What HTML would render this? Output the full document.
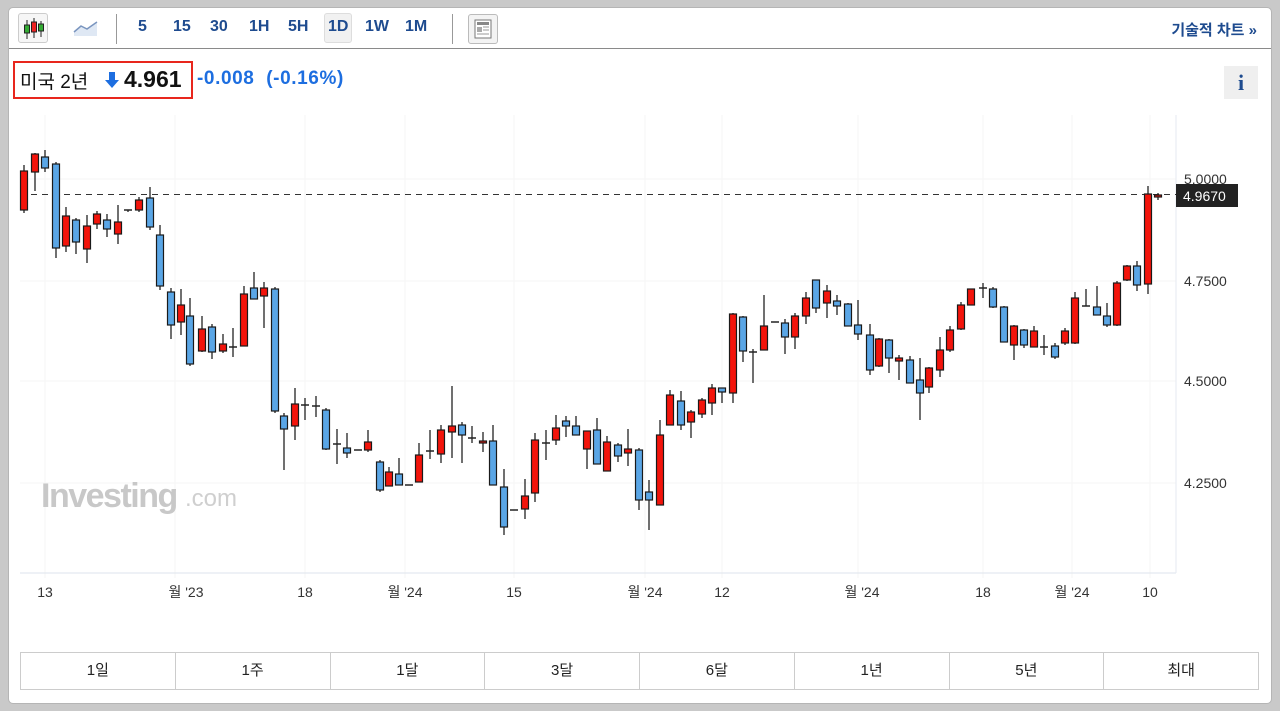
<!DOCTYPE html>
<html><head><meta charset="utf-8"><style>
*{margin:0;padding:0;box-sizing:border-box}
body{width:1280px;height:711px;background:#c9c9c9;font-family:"Liberation Sans","Noto Sans CJK KR",sans-serif;position:relative;overflow:hidden}
#panel{position:absolute;left:8px;top:7px;width:1264px;height:697px;background:#fff;border:1px solid #b5b5b5;border-radius:5px}
.tb{position:absolute;top:0;left:0;right:0;height:41px;border-bottom:1px solid #8a8a8a}
.tbi{position:absolute;top:10px;font-size:16px;font-weight:bold;color:#1e4b8f}
.sel{background:#f1f1f1;border:1px solid #ddd;border-radius:3px}
#svg{position:absolute;left:0;top:0}
.btns{position:absolute;left:11px;top:644px;width:1239px;height:38px;border:1px solid #ccc;display:flex}
.btns div{flex:1;border-right:1px solid #ccc;text-align:center;line-height:36px;font-size:15px;color:#222}
.btns div:last-child{border-right:none}
</style></head><body>
<div id="panel">
<div class="tb">
 <div style="position:absolute;left:9px;top:5px;width:30px;height:30px;border:1px solid #ccc;border-radius:3px;background:#f6f6f6">
  <svg width="30" height="30"><g stroke="#222" stroke-width="1"><line x1="8" y1="6" x2="8" y2="25"/><line x1="15" y1="4" x2="15" y2="24"/><line x1="22" y1="7" x2="22" y2="23"/></g><rect x="5.5" y="11" width="5" height="8" fill="#3a3" stroke="#222"/><rect x="12.5" y="8" width="5" height="10" fill="#e22" stroke="#222"/><rect x="19.5" y="10" width="5" height="7" fill="#3a3" stroke="#222"/></svg>
 </div>
 <svg style="position:absolute;left:64px;top:10px" width="26" height="20"><path d="M1 14 L8 8 L14 11 L24 4 L24 18 L1 18Z" fill="#dfe8f4"/><path d="M1 14 L8 8 L14 11 L24 4" fill="none" stroke="#7a95bf" stroke-width="1.5"/></svg>
 <div style="position:absolute;left:107px;top:6px;width:1px;height:30px;background:#999"></div>
 <span class="tbi" style="left:129px">5</span>
 <span class="tbi" style="left:164px">15</span>
 <span class="tbi" style="left:201px">30</span>
 <span class="tbi" style="left:240px">1H</span>
 <span class="tbi" style="left:279px">5H</span>
 <span class="tbi sel" style="left:315px;top:5px;padding:4px 3px;height:30px">1D</span>
 <span class="tbi" style="left:356px">1W</span>
 <span class="tbi" style="left:396px">1M</span>
 <div style="position:absolute;left:443px;top:6px;width:1px;height:30px;background:#999"></div>
 <div style="position:absolute;left:459px;top:6px;width:30px;height:30px;border:1px solid #bbb;border-radius:3px;background:#f3f3f3">
  <svg width="28" height="28"><rect x="6" y="5" width="16" height="18" fill="#fff" stroke="#777"/><rect x="8" y="7" width="12" height="3" fill="#888"/><rect x="8" y="12" width="5" height="5" fill="#aaa"/><g stroke="#999"><line x1="14" y1="12" x2="20" y2="12"/><line x1="14" y1="15" x2="20" y2="15"/><line x1="8" y1="19" x2="20" y2="19"/></g></svg>
 </div>
 <span style="position:absolute;right:14px;top:11px;font-size:15px;font-weight:bold;color:#1e4b8f">기술적 차트 »</span>
</div>
<div style="position:absolute;left:4px;top:53px;width:180px;height:38px;border:2px solid #e8261d"></div>
<div style="position:absolute;left:11px;top:59px;font-size:19px;color:#111;white-space:nowrap">미국 2년</div>
<svg style="position:absolute;left:96px;top:64px" width="14" height="16"><path d="M4 0h6v8h4L7 16 0 8h4z" fill="#1d6ee0"/></svg>
<div style="position:absolute;left:115px;top:58px;font-size:23px;font-weight:bold;color:#111">4.961</div>
<div style="position:absolute;left:188px;top:60px;font-size:19px;font-weight:bold;color:#1d6ee0;white-space:nowrap;letter-spacing:0.6px">-0.008&nbsp; (-0.16%)</div>
<div style="position:absolute;left:1215px;top:58px;width:34px;height:33px;background:#efefef;text-align:center;font:bold 22px 'Liberation Serif',serif;color:#1e4b8f;line-height:33px">i</div>
<div class="btns"><div>1일</div><div>1주</div><div>1달</div><div>3달</div><div>6달</div><div>1년</div><div>5년</div><div>최대</div></div>
</div>
<svg id="svg" width="1280" height="711"></svg>
<script>
var C=[[24,171,210,165,213,'r'],[35,154,172,153,191,'r'],[45,157,168,150,172,'b'],[56,164,248,162,258,'b'],[66,216,246,207,252,'r'],[76,220,242,218,254,'b'],[87,226,249,215,263,'r'],[97,214,224,211,229,'r'],[107,220,229,214,237,'b'],[118,222,234,205,244,'r'],[128,210,211,210,212,'d'],[139,200,210,197,212,'r'],[150,198,227,187,230,'b'],[160,235,286,225,290,'b'],[171,292,325,288,339,'b'],[181,305,322,289,335,'r'],[190,316,364,298,366,'b'],[202,329,351,316,352,'r'],[212,327,352,324,359,'b'],[223,344,351,334,353,'r'],[233,347,347,328,357,'d'],[244,294,346,286,346,'r'],[254,288,299,272,299,'b'],[264,288,296,282,328,'r'],[275,289,411,287,413,'b'],[284,416,429,413,470,'b'],[295,404,426,388,440,'r'],[305,405,405,398,420,'d'],[316,406,406,396,417,'d'],[326,410,449,408,450,'b'],[337,444,444,429,464,'d'],[347,448,453,433,458,'b'],[358,450,450,450,450,'d'],[368,442,450,430,452,'r'],[380,462,490,460,492,'b'],[389,472,486,467,486,'r'],[399,474,485,458,485,'b'],[409,485,485,485,485,'d'],[419,455,482,443,482,'r'],[430,451,451,430,459,'d'],[441,430,454,425,463,'r'],[452,426,432,386,458,'r'],[462,425,435,422,463,'b'],[472,438,438,426,443,'d'],[483,441,443,432,452,'r'],[493,441,485,425,485,'b'],[504,487,527,469,535,'b'],[514,510,510,510,510,'d'],[525,496,509,479,519,'r'],[535,440,493,433,502,'r'],[546,443,443,430,460,'d'],[556,428,440,415,445,'r'],[566,421,426,416,437,'b'],[576,426,435,416,435,'b'],[587,431,449,431,469,'r'],[597,430,464,418,464,'b'],[607,442,471,436,471,'r'],[618,445,456,443,462,'b'],[628,449,453,429,466,'r'],[639,450,500,448,510,'b'],[649,492,500,480,530,'b'],[660,435,505,420,505,'r'],[670,395,425,390,425,'r'],[681,401,425,391,430,'b'],[691,412,422,410,438,'r'],[702,400,414,398,418,'r'],[712,388,403,384,415,'r'],[722,388,392,388,403,'b'],[733,314,393,313,403,'r'],[743,317,351,316,362,'b'],[753,352,352,349,383,'d'],[764,326,350,295,350,'r'],[775,322,322,322,322,'d'],[785,323,337,319,354,'b'],[795,316,337,313,349,'r'],[806,298,316,292,324,'r'],[816,280,308,280,313,'b'],[827,291,303,285,318,'r'],[837,301,306,295,315,'b'],[848,304,326,303,326,'b'],[858,325,334,300,340,'b'],[870,335,370,324,375,'b'],[879,339,366,338,367,'r'],[889,340,358,339,373,'b'],[899,358,361,355,380,'r'],[910,360,383,356,383,'b'],[920,380,393,358,420,'b'],[929,368,387,367,393,'r'],[940,350,370,337,377,'r'],[950,330,350,326,352,'r'],[961,305,329,302,330,'r'],[971,289,305,289,304,'r'],[983,288,288,283,298,'d'],[993,289,307,287,308,'b'],[1004,307,342,306,342,'b'],[1014,326,345,325,360,'r'],[1024,330,345,329,348,'b'],[1034,331,347,326,347,'r'],[1044,347,347,335,355,'d'],[1055,346,357,343,359,'b'],[1065,331,343,328,345,'r'],[1075,298,343,292,344,'r'],[1086,306,306,289,306,'d'],[1097,307,315,286,315,'b'],[1107,316,325,303,327,'b'],[1117,283,325,281,326,'r'],[1127,266,280,265,281,'r'],[1137,266,285,261,291,'b'],[1148,194,284,186,294,'r'],[1158,195,197,193,200,'r']];
var s='';
var gx=[45,175,305,405,514,645,722,858,983,1072,1150];
gx.forEach(function(x){s+='<line x1="'+x+'" y1="115" x2="'+x+'" y2="578" stroke="#f6f6f6"/>';});
[179,281,381,483].forEach(function(y){s+='<line x1="20" y1="'+y+'" x2="1176" y2="'+y+'" stroke="#f6f6f6"/>';});
s+='<line x1="20" y1="573" x2="1176" y2="573" stroke="#dde3ec"/><line x1="1176" y1="115" x2="1176" y2="573" stroke="#e6eaf0"/>';
s+='<text x="41" y="507" font-family="Liberation Sans,sans-serif" font-weight="bold" font-size="34" fill="#c8c8c8" letter-spacing="-1.5">Investing</text><text x="185" y="506" font-family="Liberation Sans,sans-serif" font-size="24" fill="#cfcfcf">.com</text>';
s+='<line x1="20" y1="194.5" x2="1176" y2="194.5" stroke="#333" stroke-dasharray="6,5"/>';
C.forEach(function(c){var x=c[0];s+='<line x1="'+x+'" y1="'+c[3]+'" x2="'+x+'" y2="'+Math.max(c[4],c[2])+'" stroke="#222" stroke-width="1.3"/>';
if(c[5]=='d'){s+='<line x1="'+(x-4)+'" y1="'+c[1]+'" x2="'+(x+4)+'" y2="'+c[1]+'" stroke="#222" stroke-width="1.5"/>';}
else{var h=Math.max(c[2]-c[1],2);s+='<rect x="'+(x-3.5)+'" y="'+c[1]+'" width="7" height="'+h+'" fill="'+(c[5]=='r'?'#f3140b':'#5aa6e6')+'" stroke="#1a1a1a" stroke-width="1.2"/>';}});
[['5.0000',184],['4.7500',286],['4.5000',386],['4.2500',488]].forEach(function(t){s+='<text x="1184" y="'+t[1]+'" font-family="Liberation Sans,sans-serif" font-size="14" fill="#333">'+t[0]+'</text>';});
s+='<rect x="1176" y="184" width="62" height="23" fill="#222"/><text x="1183" y="201" font-family="Liberation Sans,sans-serif" font-size="14" fill="#fff">4.9670</text>';
[['13',45],['월 \'23',186],['18',305],['월 \'24',405],['15',514],['월 \'24',645],['12',722],['월 \'24',862],['18',983],['월 \'24',1072],['10',1150]].forEach(function(t){s+='<text x="'+t[1]+'" y="597" text-anchor="middle" font-family="Liberation Sans,Noto Sans CJK KR,sans-serif" font-size="14" fill="#333">'+t[0]+'</text>';});
document.getElementById('svg').innerHTML=s;
</script>
</body></html>
